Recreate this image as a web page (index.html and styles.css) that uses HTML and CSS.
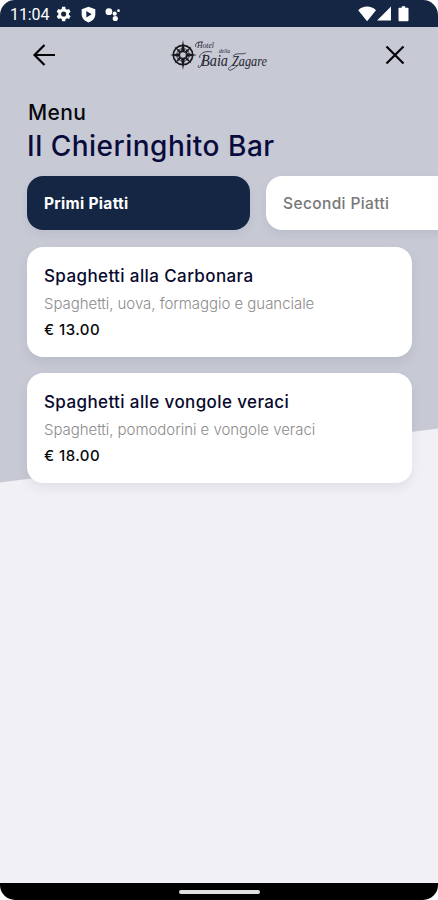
FILE: index.html
```html
<!DOCTYPE html>
<html lang="it">
<head>
<meta charset="utf-8">
<meta name="viewport" content="width=device-width">
<title>Il Chieringhito Bar</title>
<link rel="stylesheet" href="styles.css">
</head>
<body>
<div class="phone">
  <header class="status">
    <span class="time">11:04</span>
    <svg class="gear" width="16" height="16" viewBox="2 2 20 20" fill="#fff"><path d="M19.400 13a7.600 7.600 0 0 0 0-2l2.100-1.700-2-3.500-2.600 1a8 8 0 0 0-1.700-1L14.800 3h-4l-.4 2.800a8 8 0 0 0-1.700 1l-2.600-1-2 3.500L6.200 11a7.600 7.600 0 0 0 0 2l-2.100 1.700 2 3.500 2.600-1a8 8 0 0 0 1.700 1l.4 2.800h4l.4-2.800a8 8 0 0 0 1.700-1l2.600 1 2-3.500zM12.800 15.200a3.200 3.200 0 1 1 0-6.400 3.200 3.200 0 0 1 0 6.400z"/></svg>
    <svg class="shield" width="15" height="17" viewBox="0 0 15 17"><path d="M7.500.7l6.800 2.500v5c0 3.700-2.600 6.700-6.800 8.200C3.300 14.900.7 11.900.7 8.200v-5z" fill="#fff"/><path d="M5.300 5.100l5.400 3.200-5.400 3.200z" fill="#142644"/></svg>
    <svg class="assist" width="16" height="15" viewBox="0 0 16 15" fill="#fff"><circle cx="3.900" cy="4.700" r="3.400"/><circle cx="9.700" cy="6.700" r="2.100"/><circle cx="13.500" cy="3.700" r="1.400"/><circle cx="10.300" cy="11.500" r="2.600"/></svg>
    <svg class="signals" width="52" height="18" viewBox="0 0 52 18" fill="#fff"><path d="M.2 5.300C5 .3 13.200.3 18 5.300L9.100 16.200zM33 1.500v14H19zM41.500 2.800h2.300V1.200h3.400v1.600h2.300c.6 0 1 .4 1 1v11.400c0 .6-.4 1-1 1h-8c-.6 0-1-.4-1-1V3.800c0-.6.4-1 1-1z"/></svg>
  </header>
  <main class="screen">
    <nav class="toolbar">
      <svg width="24" height="24" viewBox="0 0 24 24" class="stroke"><path d="M23 12H2.500M12.500 2L2.500 12l10 10"/></svg>
      <svg class="logo" width="102" height="38" viewBox="0 0 102 38">
        <g fill="none" stroke="#18191f"><circle cx="14" cy="19" r="9.700" stroke-width="1.700"/><circle cx="14" cy="19" r="6.300" stroke-width=".8"/></g>
        <path fill="#18191f" d="M14 4l2.200 12.800L28 19l-11.800 2.200L14 34l-2.200-12.800L1 19l10.800-2.200zM5.500 10.500l7 5-2 2zM22.500 10.500l-7 5 2 2zM5.500 27.500l7-5-2-2zM22.500 27.500l-7-5 2-2z"/>
        <circle cx="14" cy="19" r="2.800" fill="#c7c9d5"/>
        <g class="script"><text x="28" y="12" font-size="9" textLength="17" lengthAdjust="spacingAndGlyphs">Hotel</text><text x="50" y="17" font-size="6.500" textLength="11" lengthAdjust="spacingAndGlyphs">della</text><text x="32" y="30" font-size="16" textLength="27" lengthAdjust="spacingAndGlyphs">Baia</text><text x="63" y="30" font-size="14" textLength="35" lengthAdjust="spacingAndGlyphs">Zagare</text></g>
        <path d="M34 6c-5-1-9 2-7 5M43 16c-8-2-14 3-12 6M36 18l-4 12c-2 3-4 1-2-1M64 20c4-4 9-1 13-3M64 29c-5 2-6 6-2 5 3-1 4-3 6-4" fill="none" stroke="#292b33" stroke-width=".8"/>
      </svg>
      <svg width="22" height="22" viewBox="0 0 22 22" class="stroke"><path d="M2.500 2.500l17 17M19.500 2.500l-17 17"/></svg>
    </nav>
    <div class="heading">
      <p class="eyebrow">Menu</p>
      <h1>Il Chieringhito Bar</h1>
    </div>
    <div class="tabs">
      <div class="tab active">Primi Piatti</div>
      <div class="tab">Secondi Piatti</div>
    </div>
    <section class="dishes">
      <article class="card">
        <h2>Spaghetti alla Carbonara</h2>
        <p class="desc">Spaghetti, uova, formaggio e guanciale</p>
        <p class="price">€ 13.00</p>
      </article>
      <article class="card">
        <h2>Spaghetti alle vongole veraci</h2>
        <p class="desc">Spaghetti, pomodorini e vongole veraci</p>
        <p class="price">€ 18.00</p>
      </article>
    </section>
  </main>
  <footer class="navbar"><span class="pill"></span></footer>
</div>
</body>
</html>
```
FILE: styles.css
```css
* { box-sizing: border-box; margin: 0; padding: 0; }
body { background: #fff; font-family: Inter, sans-serif; }
.phone { width: 438px; height: 900px; border-radius: 15px; overflow: hidden; display: flex; flex-direction: column; }
.status { height: 27px; background: #142644; display: flex; align-items: center; padding: 1px 28px 0 10px; flex: none; }
.time { font: 400 16px Roboto, sans-serif; letter-spacing: -.1px; color: #fff; width: 45px; }
.shield { margin-left: 10px; }
.assist { margin-left: 9px; }
.signals { margin-left: auto; }
.screen { flex: 1; background: linear-gradient(173deg, #c7c9d5 0 451.500px, #f0f0f5 452.500px); overflow: hidden; }
.toolbar { height: 56px; display: flex; align-items: center; justify-content: space-between; padding: 0 32px; }
.stroke { fill: none; stroke: #050507; stroke-width: 2.200; }
.script { font-family: "Liberation Serif", serif; font-style: italic; fill: #24262e; }
.heading { padding: 15px 27px 0; height: 93px; }
.eyebrow { font-size: 21px; font-weight: 500; line-height: 29px; letter-spacing: .4px; color: #08080c; padding-left: 1px; }
h1 { font-size: 28px; font-weight: 500; line-height: 39px; letter-spacing: .5px; color: #090b3d; white-space: nowrap; }
.tabs { display: flex; gap: 16px; padding-left: 27px; height: 54px; }
.tab { flex: none; width: 223px; height: 54px; border-radius: 16px; background: #fff; color: #777; display: flex; align-items: center; padding-left: 17px; font-size: 15.500px; font-weight: 500; letter-spacing: .38px; box-shadow: 0 4px 10px rgba(20, 20, 40, .06); }
.tab.active { background: #142644; color: #fff; font-weight: 700; letter-spacing: .3px; }
.dishes { padding: 17px 27px; display: grid; gap: 16px; }
.card { width: 385px; height: 110px; border-radius: 16px; background: #fff; padding: 17px; box-shadow: 0 5px 12px rgba(20, 20, 40, .07); white-space: nowrap; }
h2 { font-size: 17px; font-weight: 500; line-height: 24px; letter-spacing: .39px; color: #08092d; }
.desc { font-size: 15px; font-weight: 300; line-height: 20px; letter-spacing: -.04px; margin-top: 6px; color: #8c8c8c; }
.price { font-size: 15px; font-weight: 500; line-height: 20px; letter-spacing: .45px; margin-top: 6px; color: #09090b; }
.navbar { height: 17px; flex: none; background: #000; display: flex; justify-content: center; align-items: center; padding-top: 1px; }
.pill { width: 81px; height: 4px; border-radius: 2px; background: #e3e1df; }
```
